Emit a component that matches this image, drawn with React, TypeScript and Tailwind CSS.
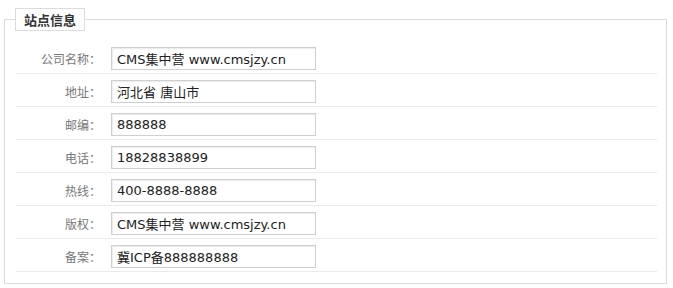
const rows = [
  { label: "公司名称：", value: "CMS集中营 www.cmsjzy.cn" },
  { label: "地址：", value: "河北省 唐山市" },
  { label: "邮编：", value: "888888" },
  { label: "电话：", value: "18828838899" },
  { label: "热线：", value: "400-8888-8888" },
  { label: "版权：", value: "CMS集中营 www.cmsjzy.cn" },
  { label: "备案：", value: "冀ICP备888888888" },
];

export default function App() {
  return (
    <div className="w-[673px] h-[288px] bg-white pt-[8px] pl-[4px] font-['DejaVu_Sans','Noto_Sans_CJK_SC',sans-serif]">
      <fieldset className="w-[663px] h-[276px] border border-[#dcdcdc] pl-[10px] pr-[9px] pt-[10px]">
        <legend className="border border-[#dcdcdc] bg-white px-[8px] h-[23px] leading-[21px] text-[13px] font-bold text-[#333] font-['Noto_Sans_CJK_SC',sans-serif]">
          站点信息
        </legend>
        <div className="ml-[1px]">
          {rows.map((r) => (
            <div key={r.label} className="flex h-[33px] pt-[6px] border-b border-[#ebebeb]">
              <label className="w-[85px] text-right text-[12px] leading-[23px] text-[#777] font-['Noto_Sans_CJK_SC',sans-serif]">
                {r.label}
              </label>
              <input
                readOnly
                value={r.value}
                className="ml-[10px] w-[205px] h-[23px] border border-[#cfcfcf] shadow-[inset_1px_1px_1px_rgba(0,0,0,0.08)] px-[5px] text-[13px] text-[#222] outline-none"
              />
            </div>
          ))}
        </div>
      </fieldset>
    </div>
  );
}
